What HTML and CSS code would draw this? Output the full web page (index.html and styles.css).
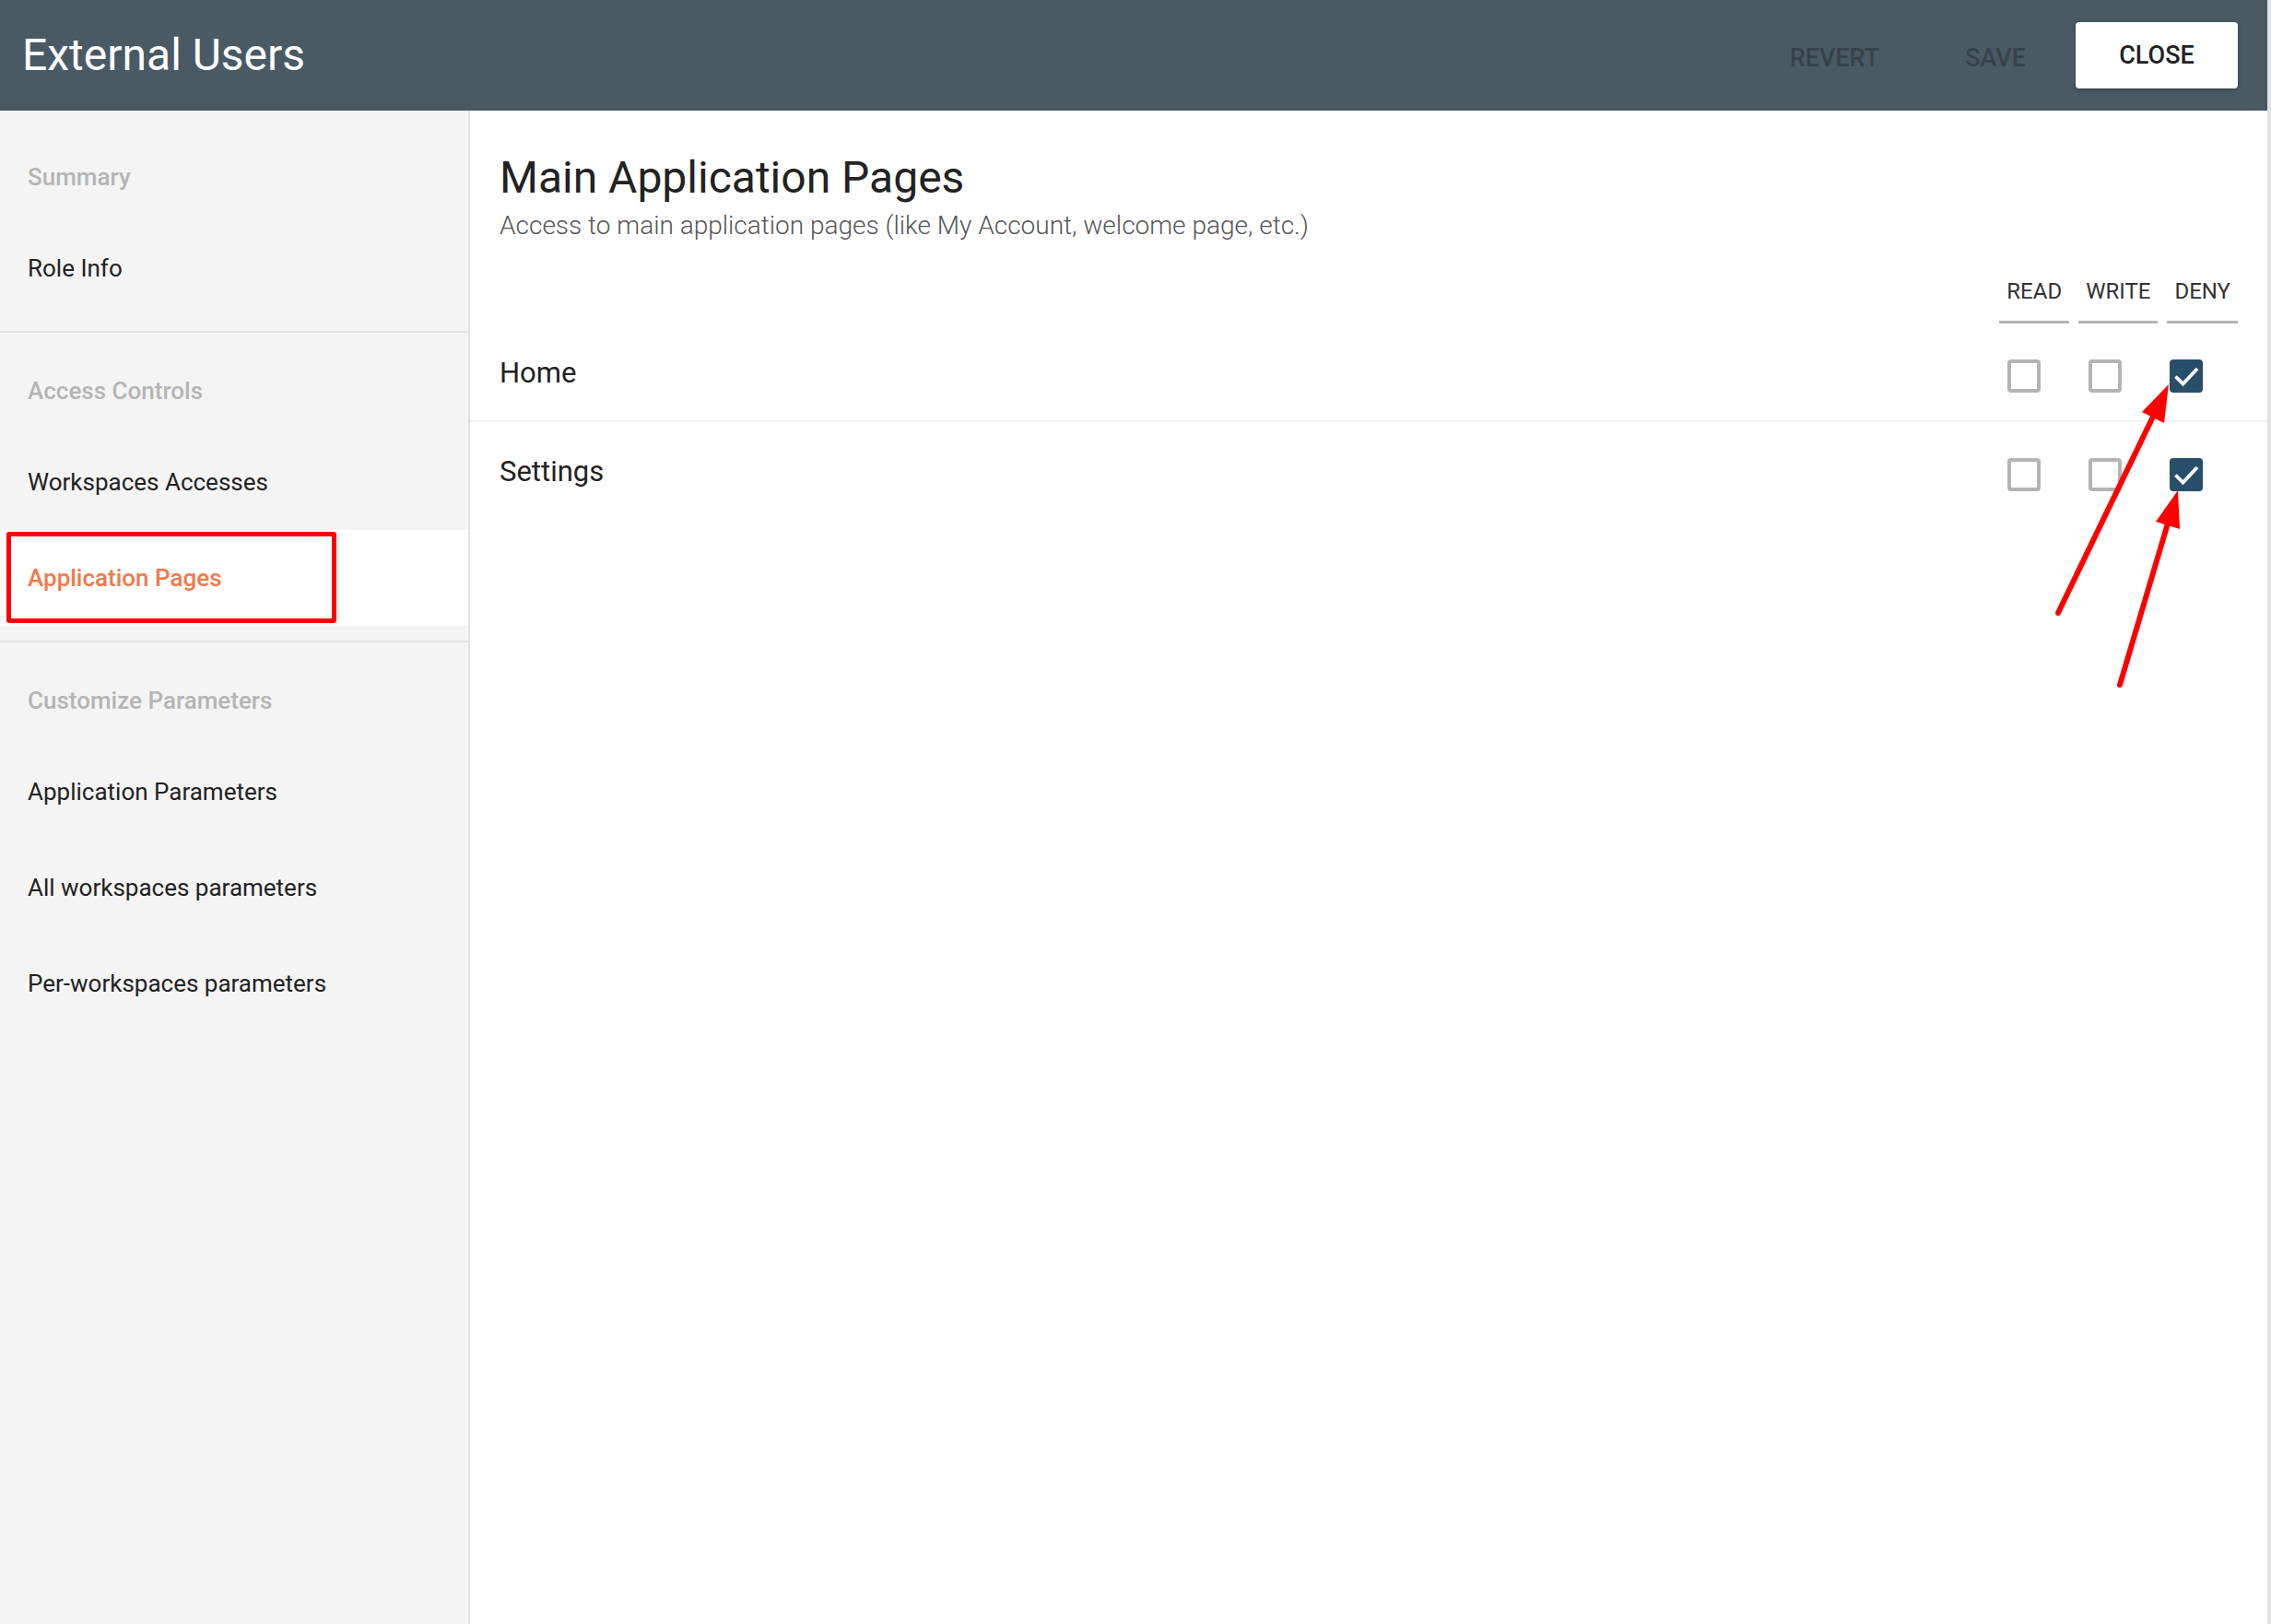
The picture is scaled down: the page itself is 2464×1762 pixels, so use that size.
FILE: index.html
```html
<!DOCTYPE html>
<html lang="en">
<head>
<meta charset="utf-8">
<title>External Users</title>
<link rel="stylesheet" href="styles.css">
</head>
<body>
<div class="page">
  <div class="dialog">
    <header class="topbar">
      <h1 class="topbar-title">External Users</h1>
      <div class="topbar-actions">
        <button class="btn btn-flat">Revert</button>
        <button class="btn btn-flat btn-save">Save</button>
        <button class="btn btn-raised">Close</button>
      </div>
    </header>
    <div class="body">
      <nav class="sidebar">
        <section class="nav-section">
          <div class="nav-header">Summary</div>
          <div class="nav-item">Role Info</div>
        </section>
        <section class="nav-section">
          <div class="nav-header">Access Controls</div>
          <div class="nav-item">Workspaces Accesses</div>
          <div class="nav-item active">Application Pages<span class="annot-box"></span></div>
        </section>
        <section class="nav-section last">
          <div class="nav-header">Customize Parameters</div>
          <div class="nav-item">Application Parameters</div>
          <div class="nav-item">All workspaces parameters</div>
          <div class="nav-item">Per-workspaces parameters</div>
        </section>
      </nav>
      <main class="content">
        <div class="intro">
          <h2 class="content-title">Main Application Pages</h2>
          <p class="content-sub">Access to main application pages (like My Account, welcome page, etc.)</p>
        </div>
        <div class="col-heads">
          <span class="col-head">READ</span>
          <span class="col-head">WRITE</span>
          <span class="col-head">DENY</span>
        </div>
        <div class="perm-row divided">
          <span class="perm-label">Home</span>
          <div class="boxes">
            <span class="cb"></span>
            <span class="cb"></span>
            <span class="cb checked"><svg viewBox="0 0 36 36" width="36" height="36"><polyline points="6.5,18.5 14.5,26.5 30,10" fill="none" stroke="#fff" stroke-width="3.8"/></svg></span>
          </div>
        </div>
        <div class="perm-row">
          <span class="perm-label">Settings</span>
          <div class="boxes">
            <span class="cb"></span>
            <span class="cb"></span>
            <span class="cb checked"><svg viewBox="0 0 36 36" width="36" height="36"><polyline points="6.5,18.5 14.5,26.5 30,10" fill="none" stroke="#fff" stroke-width="3.8"/></svg></span>
          </div>
        </div>
      </main>
    </div>
  </div>
  <div class="edge-strip"></div>
  <svg class="annot-arrows" width="2464" height="1762" viewBox="0 0 2464 1762">
    <line x1="2233" y1="665" x2="2336" y2="452" stroke="#ff0000" stroke-width="6" stroke-linecap="round"/>
    <polygon points="2353,417 2348,459 2324,447" fill="#ff0000"/>
    <line x1="2300" y1="743" x2="2352" y2="568" stroke="#ff0000" stroke-width="6" stroke-linecap="round"/>
    <polygon points="2363,532 2365,574 2339,566" fill="#ff0000"/>
  </svg>
</div>
</body>
</html>
```

FILE: styles.css
```css
* { box-sizing: border-box; }

html, body {
  margin: 0;
  padding: 0;
  background: #ffffff;
}

body {
  font-family: Roboto, "Liberation Sans", Arial, sans-serif;
  color: #222222;
}

.page {
  position: relative;
  display: flex;
  width: 2464px;
  height: 1762px;
  overflow: hidden;
}

.dialog {
  flex: 1;
  display: flex;
  flex-direction: column;
  min-width: 0;
}

.edge-strip {
  width: 4px;
  background: #e2e2e2;
}

/* ---------- top bar ---------- */
.topbar {
  height: 120px;
  flex: none;
  background: #4a5a64;
  display: flex;
  align-items: center;
  justify-content: space-between;
  padding: 0 32px 0 24px;
}

.topbar-title {
  margin: 0;
  font-size: 48px;
  font-weight: 400;
  line-height: 56px;
  color: #ffffff;
}

.topbar-actions {
  display: flex;
  align-items: center;
}

.btn {
  font-family: Roboto, "Liberation Sans", Arial, sans-serif;
  font-size: 27px;
  font-weight: 500;
  text-transform: uppercase;
  border: 0;
  height: 72px;
  border-radius: 4px;
  background: transparent;
  cursor: pointer;
}

.btn-flat {
  color: #36424a;
  padding: 0 24px;
  margin-top: 6px;
}

.btn-save {
  margin-left: 45px;
}

.btn-raised {
  margin-left: 30px;
  width: 176px;
  background: #ffffff;
  color: #222222;
  box-shadow: 0 1px 4px rgba(0, 0, 0, 0.3);
}

/* ---------- body ---------- */
.body {
  flex: 1;
  display: flex;
  min-height: 0;
}

.sidebar {
  width: 510px;
  flex: none;
  background: #f4f4f4;
  border-right: 2px solid #e2e2e2;
  padding-top: 9px;
}

.nav-section {
  padding-bottom: 16px;
  border-bottom: 2px solid #e2e2e2;
}

.nav-section.last {
  border-bottom: 0;
}

.nav-header {
  height: 110px;
  padding: 16px 0 0 30px;
  display: flex;
  align-items: center;
  font-size: 26px;
  font-weight: 500;
  color: #b5b5b5;
}

.nav-item {
  position: relative;
  height: 104px;
  padding-left: 30px;
  display: flex;
  align-items: center;
  font-size: 26px;
  color: #222222;
}

.nav-item.active {
  background: #ffffff;
  color: #ef7a4b;
  font-weight: 500;
}

.annot-box {
  position: absolute;
  left: 7px;
  top: 2px;
  width: 358px;
  height: 99px;
  border: 5px solid #ff0000;
  border-radius: 3px;
}

/* ---------- content ---------- */
.content {
  flex: 1;
  min-width: 0;
  background: #ffffff;
  padding-top: 45px;
}

.intro {
  padding: 0 32px;
}

.content-title {
  margin: 0;
  font-size: 48px;
  font-weight: 400;
  line-height: 56px;
  color: #222222;
}

.content-sub {
  margin: 8px 0 0;
  font-size: 28px;
  font-weight: 300;
  line-height: 32px;
  color: #555555;
}

.col-heads {
  display: flex;
  justify-content: flex-end;
  gap: 10px;
  padding: 0 32px;
  margin-top: 41px;
}

.col-head {
  padding: 0 8px 18px;
  border-bottom: 3px solid #b4b4b4;
  font-size: 24px;
  line-height: 28px;
  color: #333333;
}

.perm-row {
  height: 105px;
  display: flex;
  align-items: center;
  justify-content: space-between;
  padding: 0 70px 0 32px;
}

.perm-row.divided {
  border-bottom: 2px solid #f2f2f2;
  height: 107px;
}

.perm-label {
  font-size: 31px;
  color: #222222;
  margin-top: 2px;
}

.boxes {
  display: flex;
  gap: 52px;
  margin-top: 8px;
}

.cb {
  width: 36px;
  height: 36px;
  border: 4px solid #b4b4b4;
  border-radius: 4px;
  display: block;
}

.cb.checked {
  border: 0;
  background: #284e6a;
}

.cb svg {
  display: block;
}

.annot-arrows {
  position: absolute;
  left: 0;
  top: 0;
  pointer-events: none;
}
```
